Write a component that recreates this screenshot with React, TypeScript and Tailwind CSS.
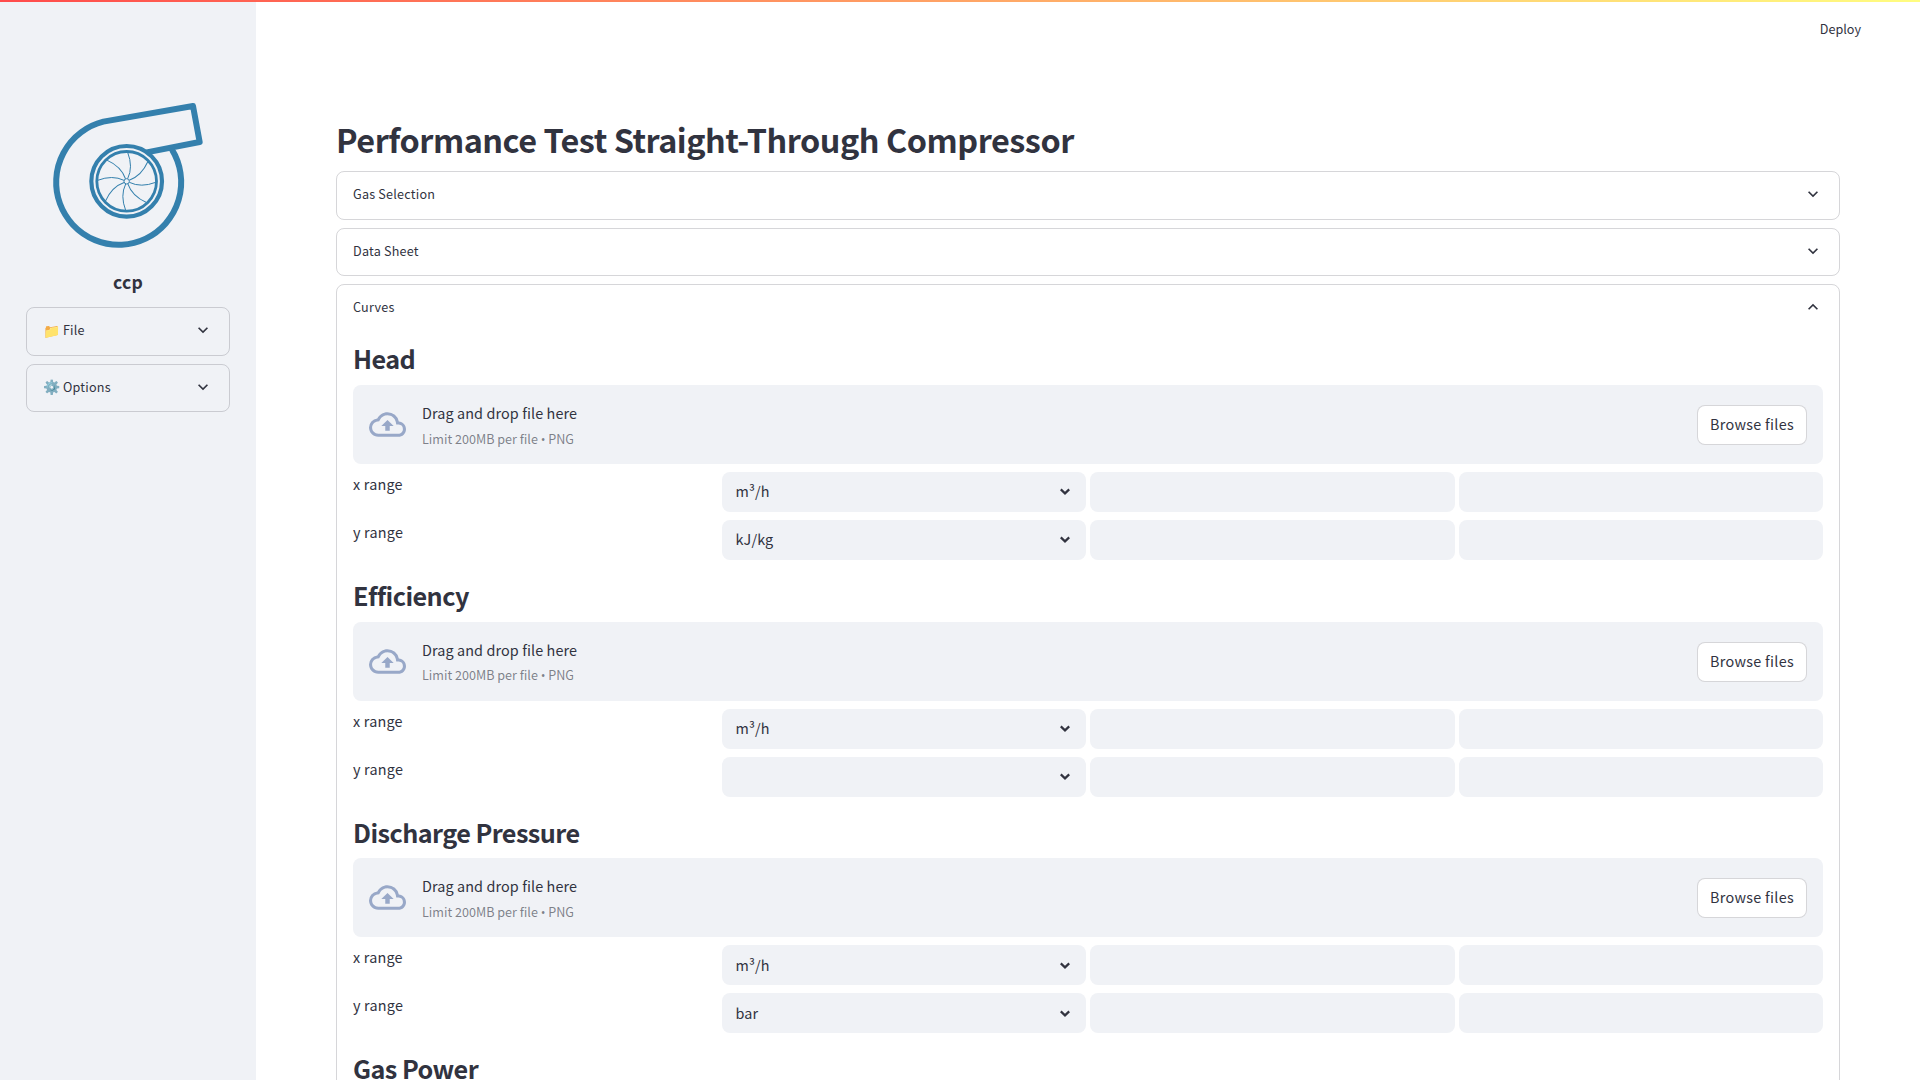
import React from "react";

const FONT = "font-['Noto_Sans_CJK_SC','Noto_Color_Emoji',sans-serif]";

function ExpandIcon({ open = false }: { open?: boolean }) {
  return (
    <svg viewBox="0 0 24 24" className="mb-0.5 size-5 shrink-0" fill="currentColor">
      <path
        d={
          open
            ? "M12 8l-6 6 1.41 1.41L12 10.83l4.59 4.58L18 14z"
            : "M7.41 8.59 12 13.17l4.59-4.58L18 10l-6 6-6-6z"
        }
      />
    </svg>
  );
}

function Summary({ children, emoji, open }: { children: React.ReactNode; emoji?: string; open?: boolean }) {
  return (
    <div className="flex h-[46.4px] items-center justify-between px-4">
      <span className="flex items-center pb-0.5 text-[12.6px] leading-[22.4px] tracking-[0.22px]">
        {emoji && <span className="mr-[2.5px] pb-px text-[14px] tracking-normal">{emoji}</span>}
        {children}
      </span>
      <ExpandIcon open={open} />
    </div>
  );
}

function Expander({ children, emoji }: { children: React.ReactNode; emoji?: string }) {
  return (
    <div className="rounded-lg border border-[#31333f]/20">
      <Summary emoji={emoji}>{children}</Summary>
    </div>
  );
}

function Logo() {
  const angles = [0, 45, 90, 135, 180, 225, 270, 315];
  return (
    <svg viewBox="0 0 768 510" className="h-[170px] w-64" fill="none" stroke="#3480ad">
      <path
        d="M516 209A187.5 187.5 0 1 1 310 125L579 78L599 186L440 217"
        transform="translate(0 -15)"
        strokeWidth="18"
        strokeLinejoin="round"
      />
      <g transform="translate(380 289)">
        <circle r="106" strokeWidth="12.5" />
        <circle r="89.5" strokeWidth="8.5" />
        <circle r="8" strokeWidth="3" />
        {angles.map((a) => (
          <path key={a} d="M3 -8Q20 -43 3 -87" strokeWidth="3" transform={`rotate(${a})`} />
        ))}
      </g>
    </svg>
  );
}

function Uploader() {
  return (
    <div className="flex h-[79px] items-center rounded-lg bg-[#f0f2f6] px-4">
      <svg viewBox="0 0 24 24" className="size-[37px] text-[#98a8c8]" fill="currentColor">
        <path d="M19.35 10.04A7.49 7.49 0 0 0 12 4C9.11 4 6.6 5.64 5.35 8.04A5.994 5.994 0 0 0 0 14c0 3.31 2.69 6 6 6h13c2.76 0 5-2.24 5-5 0-2.64-2.05-4.78-4.65-4.96zM19 18H6c-2.21 0-4-1.79-4-4 0-2.05 1.53-3.76 3.56-3.97l1.07-.11.5-.95A5.469 5.469 0 0 1 12 6c2.62 0 4.88 1.86 5.39 4.43l.3 1.5 1.53.11A2.98 2.98 0 0 1 22 15c0 1.65-1.35 3-3 3zM8 13h2.55v3h2.9v-3H16l-4-4z" />
      </svg>
      <div className="ml-4 flex flex-1 flex-col pt-0.5">
        <span className="text-[14.4px] leading-[25.6px] tracking-[0.1px]">Drag and drop file here</span>
        <span className="pt-px text-[12.6px] leading-6 text-[#31333f]/60">
          Limit 200MB per file <span className="font-['Open_Sans',sans-serif] leading-none">•</span> PNG
        </span>
      </div>
      <button className="mt-px h-10 w-[110px] rounded-lg border border-[#31333f]/20 bg-white pb-0.5 text-[14.4px] tracking-[0.28px]">
        Browse files
      </button>
    </div>
  );
}

function RangeRow({ label, unit }: { label: string; unit: string }) {
  return (
    <div className="grid h-10 grid-cols-4 gap-1">
      <span className="text-[14.4px] leading-[23.6px] tracking-[0.2px]">{label}</span>
      <div className="flex items-center justify-between rounded-lg bg-[#f0f2f6] pr-4 pl-3.5">
        <span className="pb-[1.5px] text-[14.4px] tracking-[0.12px]">{unit}</span>
        <svg viewBox="0 0 10 7" className="h-[7px] w-2.5" fill="none" stroke="currentColor" strokeWidth="2.2">
          <path d="M0.8 1.4L5 5.4L9.2 1.4" />
        </svg>
      </div>
      <div className="rounded-lg bg-[#f0f2f6]" />
      <div className="rounded-lg bg-[#f0f2f6]" />
    </div>
  );
}

function CurveTitle({ children }: { children: React.ReactNode }) {
  return (
    <h3 className="h-[45.6px] pt-[11px] text-[25.2px] leading-[33.6px] font-semibold tracking-[-0.55px]">
      {children}
    </h3>
  );
}

function Curve({ title, x, y }: { title: string; x: string; y: string }) {
  return (
    <section className="flex flex-col gap-2">
      <CurveTitle>{title}</CurveTitle>
      <Uploader />
      <RangeRow label="x range" unit={x} />
      <RangeRow label="y range" unit={y} />
    </section>
  );
}

const curves = [
  { title: "Head", x: "m³/h", y: "kJ/kg" },
  { title: "Efficiency", x: "m³/h", y: "" },
  { title: "Discharge Pressure", x: "m³/h", y: "bar" },
];

export default function App() {
  return (
    <div className={`relative flex h-screen overflow-hidden bg-white text-[#31333f] ${FONT}`}>
      <div className="absolute inset-x-0 top-0 h-0.5 bg-[linear-gradient(90deg,#ff4b4b,#fffd80)]" />
      <aside className="flex w-64 shrink-0 flex-col bg-[#f0f2f6] pt-[85px]">
        <Logo />
        <div className="mt-3 h-[40.2px] text-center text-[17.6px] leading-[30px] font-bold tracking-[0.15px]">ccp</div>
        <div className="flex flex-col gap-2 px-[26px]">
          <Expander emoji="📁">File</Expander>
          <Expander emoji="⚙️">Options</Expander>
        </div>
      </aside>
      <main className="flex min-w-0 flex-1 flex-col px-20">
        <header className="-mr-20 flex h-[60px] shrink-0 items-center justify-end pr-[59px] pb-0.5 text-[12.6px]">
          Deploy
        </header>
        <h1 className="mt-[57px] h-[54.2px] shrink-0 text-[32.4px] leading-[43px] font-semibold tracking-[-0.48px]">
          Performance Test Straight-Through Compressor
        </h1>
        <div className="flex flex-col gap-2">
          <Expander>Gas Selection</Expander>
          <Expander>Data Sheet</Expander>
          <div className="rounded-lg border border-[#31333f]/20">
            <Summary open>Curves</Summary>
            <div className="flex flex-col gap-2 px-4 pb-4">
              {curves.map((c) => (
                <Curve key={c.title} {...c} />
              ))}
              <CurveTitle>Gas Power</CurveTitle>
            </div>
          </div>
        </div>
      </main>
    </div>
  );
}
